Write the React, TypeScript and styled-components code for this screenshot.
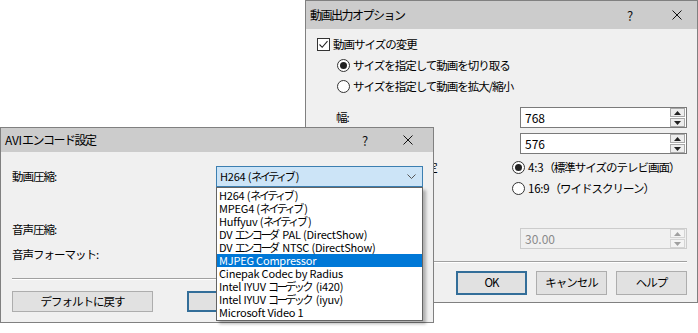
import React from "react";
import styled, { createGlobalStyle, css } from "styled-components";

const FONT = `"Noto Sans CJK JP", "Noto Sans", sans-serif`;

const GlobalStyle = createGlobalStyle`
  html, body {
    margin: 0;
    padding: 0;
    background: #ffffff;
  }
  body {
    font-family: ${FONT};
  }
`;

// ===================== DESKTOP / WINDOW =====================
const Desktop = styled.div`
  position: relative;
  width: 698px;
  height: 333px;
  overflow: hidden;
  background: #ffffff;
`;

const Window = styled.div<{ $x: number; $y: number; $w: number; $h: number }>`
  position: absolute;
  left: ${(p) => p.$x}px;
  top: ${(p) => p.$y}px;
  width: ${(p) => p.$w}px;
  height: ${(p) => p.$h}px;
  box-sizing: border-box;
  border: 1px solid #808080;
  background: #f0f0f0;
  display: flex;
  flex-direction: column;
  font-family: ${FONT};
  color: #000000;
`;

const TitleBar = styled.div<{ $h: number }>`
  flex: none;
  height: ${(p) => p.$h}px;
  background: #cccccc;
  display: flex;
  align-items: center;
  padding-left: 4px;
`;

const TitleText = styled.span`
  flex: 1;
  font-size: 12px;
  letter-spacing: -1.5px;
  line-height: 1;
`;

const TitleControls = styled.div<{ $gap: number; $right: number }>`
  display: flex;
  align-items: center;
  gap: ${(p) => p.$gap}px;
  padding-right: ${(p) => p.$right}px;
`;

const TitleGlyph = styled.span`
  width: 10px;
  height: 12px;
  display: flex;
  align-items: center;
  justify-content: center;
  font-size: 13px;
  line-height: 1;
  color: #111111;
`;

const Body = styled.div<{ $pad: string }>`
  flex: 1;
  display: flex;
  flex-direction: column;
  padding: ${(p) => p.$pad};
  font-size: 11.5px;
  letter-spacing: -1px;
`;

// ===================== ROWS =====================
const Row = styled.div<{ $mt?: number; $indent?: number; $h?: number }>`
  display: flex;
  align-items: center;
  height: ${(p) => p.$h ?? 21}px;
  margin-top: ${(p) => p.$mt ?? 0}px;
  padding-left: ${(p) => p.$indent ?? 0}px;
  line-height: 1;
`;

const Label = styled.span<{ $w?: number }>`
  flex: none;
  width: ${(p) => (p.$w ? `${p.$w}px` : "auto")};
  white-space: nowrap;
`;

const Choice = styled.span`
  display: flex;
  align-items: center;
  gap: 3px;
  white-space: nowrap;
`;

// 英数字は詰めすぎない
const Latin = styled.span`
  letter-spacing: -0.2px;
`;

const CheckBox = styled.span`
  width: 13px;
  height: 13px;
  box-sizing: border-box;
  border: 1px solid #333333;
  background: #ffffff;
  display: flex;
  align-items: center;
  justify-content: center;
`;

const RadioDot = styled.span<{ $on?: boolean }>`
  width: 13px;
  height: 13px;
  box-sizing: border-box;
  border: 1px solid #333333;
  border-radius: 50%;
  background: #ffffff;
  display: flex;
  align-items: center;
  justify-content: center;
  ${(p) =>
    p.$on &&
    css`
      &::after {
        content: "";
        width: 7px;
        height: 7px;
        border-radius: 50%;
        background: #222222;
      }
    `}
`;

// ===================== SPIN BOX =====================
const SpinBox = styled.div<{ $disabled?: boolean }>`
  flex: 1;
  height: 21px;
  box-sizing: border-box;
  border: 1px solid ${(p) => (p.$disabled ? "#cccccc" : "#7a7a7a")};
  background: ${(p) => (p.$disabled ? "#f0f0f0" : "#ffffff")};
  color: ${(p) => (p.$disabled ? "#8a8a8a" : "#000000")};
  display: flex;
  align-items: center;
  padding-left: 4px;
  letter-spacing: 0;
  font-size: 12px;
`;

const SpinValue = styled.span`
  flex: 1;
`;

const SpinColumn = styled.div`
  width: 15px;
  height: 19px;
  display: flex;
  flex-direction: column;
  gap: 1px;
  margin-right: 1px;
`;

const SpinButton = styled.div<{ $disabled?: boolean }>`
  flex: 1;
  box-sizing: border-box;
  border: 1px solid ${(p) => (p.$disabled ? "#d4d4d4" : "#a8a8a8")};
  background: ${(p) => (p.$disabled ? "#f4f4f4" : "#ededed")};
  display: flex;
  align-items: center;
  justify-content: center;
`;

const Spin: React.FC<{ value: string; disabled?: boolean }> = ({ value, disabled }) => {
  const c = disabled ? "#a0a0a0" : "#222222";
  return (
    <SpinBox $disabled={disabled}>
      <SpinValue>{value}</SpinValue>
      <SpinColumn>
        <SpinButton $disabled={disabled}>
          <svg width="7" height="4" viewBox="0 0 7 4">
            <polygon points="3.5,0 7,4 0,4" fill={c} />
          </svg>
        </SpinButton>
        <SpinButton $disabled={disabled}>
          <svg width="7" height="4" viewBox="0 0 7 4">
            <polygon points="0,0 7,0 3.5,4" fill={c} />
          </svg>
        </SpinButton>
      </SpinColumn>
    </SpinBox>
  );
};

// ===================== SEPARATOR / BUTTONS =====================
const Separator = styled.div<{ $mt: number }>`
  margin-top: ${(p) => p.$mt}px;
  height: 1px;
  background: #a0a0a0;
  border-bottom: 1px solid #ffffff;
`;

const ButtonRow = styled.div<{ $mt: number; $gap: number; $end?: boolean }>`
  display: flex;
  justify-content: ${(p) => (p.$end ? "flex-end" : "flex-start")};
  gap: ${(p) => p.$gap}px;
  margin-top: ${(p) => p.$mt}px;
`;

const Button = styled.div<{ $w: number; $h: number; $default?: boolean }>`
  width: ${(p) => p.$w}px;
  height: ${(p) => p.$h}px;
  box-sizing: border-box;
  border: ${(p) => (p.$default ? "2px solid #336e99" : "1px solid #adadad")};
  background: #e1e1e1;
  display: flex;
  align-items: center;
  justify-content: center;
  font-size: 11.5px;
  letter-spacing: -1px;
  line-height: 1;
`;

// ===================== COMBO BOX =====================
const ComboWrap = styled.div`
  position: relative;
  flex: 1;
  height: 21px;
`;

const ComboField = styled.div`
  height: 100%;
  box-sizing: border-box;
  border: 1px solid #3c7fb1;
  background: #cce4f7;
  display: flex;
  align-items: center;
  padding: 0 6px 0 3px;
  font-size: 11px;
  letter-spacing: -0.2px;
`;

const ComboText = styled.span`
  flex: 1;
  white-space: nowrap;
`;

const DropList = styled.div`
  position: absolute;
  left: 0;
  right: 0;
  top: 100%;
  box-sizing: border-box;
  border: 1px solid #646464;
  background: #ffffff;
  padding: 1px 0;
  box-shadow: 3px 3px 3px rgba(0, 0, 0, 0.28);
  z-index: 5;
`;

const DropItem = styled.div<{ $selected?: boolean }>`
  height: 13px;
  line-height: 13px;
  padding-left: 2px;
  font-size: 11px;
  letter-spacing: -0.2px;
  white-space: nowrap;
  background: ${(p) => (p.$selected ? "#0078d7" : "transparent")};
  color: ${(p) => (p.$selected ? "#ffffff" : "#000000")};
`;

// かなは Meiryo UI に合わせて詰める
const Kana = styled.span`
  letter-spacing: -2.4px;
  padding-right: 2.4px;
`;

const Jp: React.FC<{ text: string }> = ({ text }) => {
  const parts = text.split(/([\u3000-\u30ff\u4e00-\u9fff\uff00-\uffef]+)/);
  return (
    <>
      {parts.map((s, i) => (i % 2 === 1 ? <Kana key={i}>{s}</Kana> : <React.Fragment key={i}>{s}</React.Fragment>))}
    </>
  );
};

const codecs = [
  "H264 (ネイティブ)",
  "MPEG4 (ネイティブ)",
  "Huffyuv (ネイティブ)",
  "DV エンコーダ PAL (DirectShow)",
  "DV エンコーダ NTSC (DirectShow)",
  "MJPEG Compressor",
  "Cinepak Codec by Radius",
  "Intel IYUV コーデック (i420)",
  "Intel IYUV コーデック (iyuv)",
  "Microsoft Video 1",
];

const CloseIcon = () => (
  <svg width="10" height="10" viewBox="0 0 10 10">
    <path d="M0.5 0.5 L9.5 9.5 M9.5 0.5 L0.5 9.5" stroke="#111" strokeWidth="1" />
  </svg>
);

const CheckMark = () => (
  <svg width="11" height="11" viewBox="0 0 11 11">
    <polyline points="1.5,5.5 4.2,8.3 9.5,2.2" fill="none" stroke="#222" strokeWidth="1.1" />
  </svg>
);

const App: React.FC = () => {
  return (
    <>
      <GlobalStyle />
      <Desktop>
        {/* 後ろのウィンドウ */}
        <Window $x={305} $y={0} $w={393} $h={303}>
          <TitleBar $h={28}>
            <TitleText>動画出力オプション</TitleText>
            <TitleControls $gap={37} $right={15}>
              <TitleGlyph>?</TitleGlyph>
              <TitleGlyph>
                <CloseIcon />
              </TitleGlyph>
            </TitleControls>
          </TitleBar>
          <Body $pad="5px 10px 0 11px">
            <Row>
              <Choice>
                <CheckBox>
                  <CheckMark />
                </CheckBox>
                動画サイズの変更
              </Choice>
            </Row>
            <Row $indent={20}>
              <Choice>
                <RadioDot $on />
                サイズを指定して動画を切り取る
              </Choice>
            </Row>
            <Row $indent={20}>
              <Choice>
                <RadioDot />
                サイズを指定して動画を拡大/縮小
              </Choice>
            </Row>
            <Row $mt={10} $indent={19}>
              <Label $w={184}>幅:</Label>
              <Spin value="768" />
            </Row>
            <Row $mt={5} $indent={19}>
              <Label $w={184}>高さ:</Label>
              <Spin value="576" />
            </Row>
            <Row $mt={3} $indent={26}>
              <Label $w={169}>アスペクト比を固定</Label>
              <Choice>
                <RadioDot $on />
                <span>
                  <Latin>4:3</Latin>（標準サイズのテレビ画面）
                </span>
              </Choice>
            </Row>
            <Row $indent={195}>
              <Choice>
                <RadioDot />
                <span>
                  <Latin>16:9</Latin>（ワイドスクリーン）
                </span>
              </Choice>
            </Row>
            <Row $mt={29} $indent={19}>
              <Label $w={184}>フレームレート:</Label>
              <Spin value="30.00" disabled />
            </Row>
            <Separator $mt={12} />
            <ButtonRow $mt={8} $gap={9} $end>
              <Button $w={71} $h={24} $default>
                OK
              </Button>
              <Button $w={71} $h={24}>
                キャンセル
              </Button>
              <Button $w={71} $h={24}>
                ヘルプ
              </Button>
            </ButtonRow>
          </Body>
        </Window>

        {/* 前のウィンドウ */}
        <Window $x={0} $y={127} $w={434} $h={196}>
          <TitleBar $h={24}>
            <TitleText>
              <Latin>AVI</Latin>エンコード設定
            </TitleText>
            <TitleControls $gap={33} $right={20}>
              <TitleGlyph>?</TitleGlyph>
              <TitleGlyph>
                <CloseIcon />
              </TitleGlyph>
            </TitleControls>
          </TitleBar>
          <Body $pad="14px 10px 0 11px">
            <Row>
              <Label $w={204}>動画圧縮:</Label>
              <ComboWrap>
                <ComboField>
                  <ComboText>
                    <Jp text="H264 (ネイティブ)" />
                  </ComboText>
                  <svg width="9" height="5" viewBox="0 0 9 5">
                    <polyline points="0.5,0.5 4.5,4.5 8.5,0.5" fill="none" stroke="#555" strokeWidth="1" />
                  </svg>
                </ComboField>
                <DropList>
                  {codecs.map((c) => (
                    <DropItem key={c} $selected={c === "MJPEG Compressor"}>
                      <Jp text={c} />
                    </DropItem>
                  ))}
                </DropList>
              </ComboWrap>
            </Row>
            <Row $mt={32}>
              <Label>音声圧縮:</Label>
            </Row>
            <Row $mt={4}>
              <Label>音声フォーマット:</Label>
            </Row>
            <Separator $mt={13} />
            <ButtonRow $mt={11} $gap={34}>
              <Button $w={141} $h={21}>
                デフォルトに戻す
              </Button>
              <Button $w={75} $h={21} $default>
                OK
              </Button>
            </ButtonRow>
          </Body>
        </Window>
      </Desktop>
    </>
  );
};

export default App;
